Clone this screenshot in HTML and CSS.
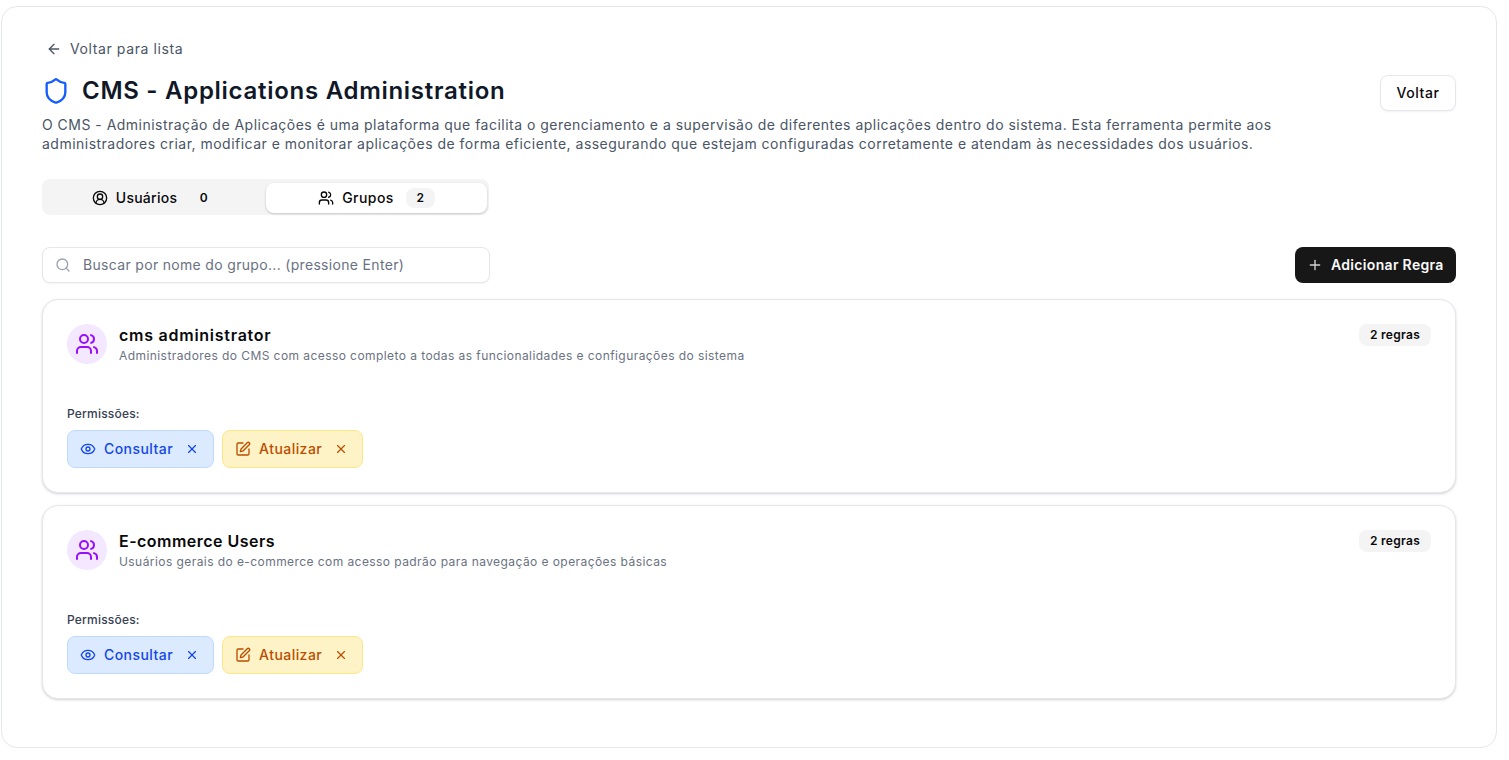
FILE: index.html
```html
<!DOCTYPE html>
<html lang="pt-BR">
<head>
<meta charset="utf-8">
<title>CMS - Applications Administration</title>
<link rel="stylesheet" href="styles.css">
</head>
<body>
<svg class="defs" width="0" height="0" aria-hidden="true">
  <symbol id="i-users" viewBox="0 0 24 24"><path d="M16 21v-2a4 4 0 0 0-4-4H6a4 4 0 0 0-4 4v2"/><path d="M16 3.128a4 4 0 0 1 0 7.744"/><path d="M22 21v-2a4 4 0 0 0-3-3.87"/><circle cx="9" cy="7" r="4"/></symbol>
  <symbol id="i-eye" viewBox="0 0 24 24"><path d="M2.062 12.348a1 1 0 0 1 0-.696 10.75 10.75 0 0 1 19.876 0 1 1 0 0 1 0 .696 10.75 10.75 0 0 1-19.876 0"/><circle cx="12" cy="12" r="3"/></symbol>
  <symbol id="i-pen" viewBox="0 0 24 24"><path d="M12 3H5a2 2 0 0 0-2 2v14a2 2 0 0 0 2 2h14a2 2 0 0 0 2-2v-7"/><path d="M18.375 2.625a1 1 0 0 1 3 3l-9.013 9.014a2 2 0 0 1-.853.505l-2.873.84a.5.5 0 0 1-.62-.62l.84-2.873a2 2 0 0 1 .506-.852z"/></symbol>
  <symbol id="i-x" viewBox="0 0 24 24"><path d="M18 6 6 18"/><path d="m6 6 12 12"/></symbol>
</svg>
<main class="panel">
  <a class="back" href="#">
    <svg class="icon i16" viewBox="0 0 24 24"><path d="m12 19-7-7 7-7"/><path d="M19 12H5"/></svg>
    <span>Voltar para lista</span>
  </a>
  <header class="head">
    <div class="head-main">
      <h1 class="title">
        <svg class="icon i28 shield" viewBox="0 0 24 24"><path d="M20 13c0 5-3.5 7.5-7.66 8.95a1 1 0 0 1-.67-.01C7.5 20.5 4 18 4 13V6a1 1 0 0 1 1-1c2 0 4.5-1.2 6.24-2.72a1.17 1.17 0 0 1 1.52 0C14.51 3.81 17 5 19 5a1 1 0 0 1 1 1z"/></svg>
        <span>CMS - Applications Administration</span>
      </h1>
      <p class="desc">O CMS - Administração de Aplicações é uma plataforma que facilita o gerenciamento e a supervisão de diferentes aplicações dentro do sistema. Esta ferramenta permite aos administradores criar, modificar e monitorar aplicações de forma eficiente, assegurando que estejam configuradas corretamente e atendam às necessidades dos usuários.</p>
    </div>
    <button class="btn-outline">Voltar</button>
  </header>

  <nav class="tabs">
    <div class="tab">
      <svg class="icon i16" viewBox="0 0 24 24"><path d="M18 20a6 6 0 0 0-12 0"/><circle cx="12" cy="10" r="4"/><circle cx="12" cy="12" r="10"/></svg>
      <span class="tab-label tab-label-narrow">Usuários</span>
      <span class="count">0</span>
    </div>
    <div class="tab tab-active">
      <svg class="icon i16" viewBox="0 0 24 24"><use href="#i-users"/></svg>
      <span class="tab-label">Grupos</span>
      <span class="count">2</span>
    </div>
  </nav>

  <div class="toolbar">
    <label class="search">
      <svg class="icon i16 search-icon" viewBox="0 0 24 24"><path d="m21 21-4.34-4.34"/><circle cx="11" cy="11" r="8"/></svg>
      <span class="search-text">Buscar por nome do grupo... (pressione Enter)</span>
    </label>
    <button class="btn-primary">
      <svg class="icon i16" viewBox="0 0 24 24"><path d="M5 12h14"/><path d="M12 5v14"/></svg>
      <span>Adicionar Regra</span>
    </button>
  </div>

  <section class="cards">
    <article class="card">
      <div class="card-top">
        <div class="avatar"><svg class="icon i24" viewBox="0 0 24 24"><use href="#i-users"/></svg></div>
        <div class="card-info">
          <h2 class="card-title card-title-wide">cms administrator</h2>
          <p class="card-sub">Administradores do CMS com acesso completo a todas as funcionalidades e configurações do sistema</p>
        </div>
        <span class="rules">2 regras</span>
      </div>
      <div class="perm-label">Permissões:</div>
      <div class="chips">
        <span class="chip chip-blue"><svg class="icon i16" viewBox="0 0 24 24"><use href="#i-eye"/></svg><span class="chip-text">Consultar</span><svg class="icon i14 chip-x" viewBox="0 0 24 24"><use href="#i-x"/></svg></span>
        <span class="chip chip-amber"><svg class="icon i16" viewBox="0 0 24 24"><use href="#i-pen"/></svg><span class="chip-text">Atualizar</span><svg class="icon i14 chip-x" viewBox="0 0 24 24"><use href="#i-x"/></svg></span>
      </div>
    </article>
    <article class="card">
      <div class="card-top">
        <div class="avatar"><svg class="icon i24" viewBox="0 0 24 24"><use href="#i-users"/></svg></div>
        <div class="card-info">
          <h2 class="card-title">E-commerce Users</h2>
          <p class="card-sub">Usuários gerais do e-commerce com acesso padrão para navegação e operações básicas</p>
        </div>
        <span class="rules">2 regras</span>
      </div>
      <div class="perm-label">Permissões:</div>
      <div class="chips">
        <span class="chip chip-blue"><svg class="icon i16" viewBox="0 0 24 24"><use href="#i-eye"/></svg><span class="chip-text">Consultar</span><svg class="icon i14 chip-x" viewBox="0 0 24 24"><use href="#i-x"/></svg></span>
        <span class="chip chip-amber"><svg class="icon i16" viewBox="0 0 24 24"><use href="#i-pen"/></svg><span class="chip-text">Atualizar</span><svg class="icon i14 chip-x" viewBox="0 0 24 24"><use href="#i-x"/></svg></span>
      </div>
    </article>
  </section>
</main>
</body>
</html>
```
FILE: styles.css
```css
* { box-sizing: border-box; }
html, body { margin: 0; height: 100%; background: #fff; }
body {
  padding: 6px 12px 12px 1px;
  font-family: Inter, "Noto Sans", sans-serif;
  font-size: 14px;
  line-height: 20px;
  color: #09090b;
  overflow: hidden;
}
.defs { position: absolute; }
.icon {
  fill: none;
  stroke: currentColor;
  stroke-width: 2;
  stroke-linecap: round;
  stroke-linejoin: round;
  flex: none;
  display: block;
}
.i14 { width: 14px; height: 14px; }
.i16 { width: 16px; height: 16px; }
.i24 { width: 24px; height: 24px; }
.i28 { width: 28px; height: 28px; }

.panel {
  width: 1496px;
  height: 742px;
  border: 1px solid #e5e7eb;
  border-radius: 16px;
  padding: 32px 40px 0;
}
.back {
  display: flex;
  align-items: center;
  gap: 8px;
  padding-left: 4px;
  color: #4a5565;
  text-decoration: none;
  letter-spacing: 0.6px;
  height: 20px;
}
.head {
  display: flex;
  justify-content: space-between;
  align-items: flex-start;
  margin-top: 16px;
}
.head-main { width: 1240px; }
.title {
  display: flex;
  align-items: center;
  gap: 12px;
  margin: 0;
  font-size: 24px;
  line-height: 32px;
  font-weight: 600;
  color: #101828;
  letter-spacing: 0.72px;
}
.shield { color: #155dfc; }
.desc {
  margin: 8px 0 0;
  color: #4a5565;
  line-height: 19px;
  letter-spacing: 0.48px;
}
.btn-outline {
  width: 76px;
  height: 36px;
  background: #fff;
  border: 1px solid #e5e7eb;
  border-radius: 8px;
  box-shadow: 0 1px 2px rgba(0,0,0,.05);
  font: 500 14px/20px Inter, sans-serif;
  color: #09090b;
  letter-spacing: 0.6px;
  padding: 0;
}
.tabs {
  display: grid;
  grid-template-columns: 222px 221px;
  width: 447px;
  height: 36px;
  margin-top: 26px;
  padding: 4px 2px 1px;
  background: #f4f4f5;
  border-radius: 8px;
}
.tab {
  display: flex;
  align-items: center;
  justify-content: center;
  gap: 8px;
  border-radius: 8px;
  height: 30px;
  font-weight: 500;
  letter-spacing: 0.45px;
}
.tab-label-narrow { letter-spacing: 0.25px; }
.tab-active {
  background: #fff;
  box-shadow: 0 1px 3px rgba(0,0,0,.12), 0 1px 2px rgba(0,0,0,.08);
}
.count {
  min-width: 29px;
  height: 20px;
  margin-left: 4px;
  border-radius: 8px;
  background: #f4f4f5;
  font-size: 12px;
  font-weight: 600;
  text-align: center;
  letter-spacing: 0;
}
.toolbar {
  display: flex;
  justify-content: space-between;
  align-items: center;
  margin-top: 32px;
}
.search {
  display: flex;
  align-items: center;
  gap: 12px;
  width: 448px;
  height: 36px;
  padding-left: 12px;
  background: #fff;
  border: 1px solid #e5e7eb;
  border-radius: 8px;
  box-shadow: 0 1px 2px rgba(0,0,0,.05);
}
.search-icon { color: #99a1af; }
.search-text { color: #6a7282; letter-spacing: 0.32px; }
.btn-primary {
  display: flex;
  align-items: center;
  gap: 8px;
  width: 161px;
  height: 36px;
  padding: 0 0 0 12px;
  background: #171717;
  color: #fafafa;
  border: 0;
  border-radius: 8px;
  font: 600 14px/20px Inter, sans-serif;
  letter-spacing: 0.32px;
}
.btn-primary .icon { color: #d4d4d4; }
.cards {
  display: flex;
  flex-direction: column;
  gap: 12px;
  margin-top: 16px;
}
.card {
  height: 194px;
  padding: 24px;
  background: #fff;
  border: 1px solid #e5e7eb;
  border-radius: 16px;
  box-shadow: 0 1px 3px rgba(0,0,0,.12), 0 1px 2px rgba(0,0,0,.06);
}
.card-top { display: flex; align-items: flex-start; gap: 12px; }
.avatar {
  width: 40px;
  height: 40px;
  border-radius: 50%;
  background: #f3e8ff;
  color: #9810fa;
  display: flex;
  align-items: center;
  justify-content: center;
  flex: none;
}
.card-info { flex: 1; }
.card-title {
  margin: 0;
  font-size: 16px;
  line-height: 22px;
  font-weight: 600;
  color: #09090b;
  letter-spacing: 0.47px;
}
.card-title-wide { letter-spacing: 0.75px; }
.card-sub {
  margin: 1px 0 0;
  font-size: 12px;
  line-height: 18px;
  color: #6a7282;
  letter-spacing: 0.43px;
}
.rules {
  height: 22px;
  width: 72px;
  text-align: center;
  background: #f4f4f5;
  border-radius: 8px;
  font-size: 12px;
  line-height: 22px;
  font-weight: 600;
  letter-spacing: 0.3px;
}
.perm-label {
  margin-top: 39px;
  font-size: 12px;
  line-height: 20px;
  font-weight: 500;
  color: #364153;
  letter-spacing: 0.2px;
}
.chips { display: flex; gap: 8px; margin-top: 6px; }
.chip {
  display: flex;
  align-items: center;
  height: 38px;
  padding: 0 14px 0 12px;
  border: 1px solid;
  border-radius: 8px;
  font-weight: 500;
  letter-spacing: 0.45px;
}
.chip-text { margin-left: 8px; }
.chip-x { margin-left: 12px; }
.chip-blue { background: #dbeafe; border-color: #bedbff; color: #1447e6; }
.chip-amber { background: #fef3c6; border-color: #fee685; color: #bb4d00; }
```
